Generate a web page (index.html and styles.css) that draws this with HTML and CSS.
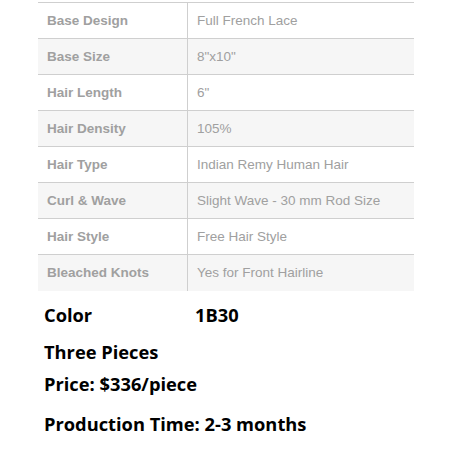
FILE: index.html
```html
<!DOCTYPE html>
<html>
<head>
<meta charset="utf-8">
<link rel="stylesheet" href="styles.css">
</head>
<body>
<div class="page">
  <table class="specs">
    <tr><th>Base Design</th><td>Full French Lace</td></tr>
    <tr class="alt"><th>Base Size</th><td>8"x10"</td></tr>
    <tr><th>Hair Length</th><td>6"</td></tr>
    <tr class="alt"><th>Hair Density</th><td>105%</td></tr>
    <tr><th>Hair Type</th><td>Indian Remy Human Hair</td></tr>
    <tr class="alt"><th>Curl &amp; Wave</th><td>Slight Wave - 30 mm Rod Size</td></tr>
    <tr><th>Hair Style</th><td>Free Hair Style</td></tr>
    <tr class="alt"><th>Bleached Knots</th><td>Yes for Front Hairline</td></tr>
  </table>
  <div class="info">
    <div class="line color-line"><span class="key">Color</span><span class="val">1B30</span></div>
    <div class="line pieces">Three Pieces</div>
    <div class="line price">Price: $336/piece</div>
    <div class="line prod">Production Time: 2-3 months</div>
  </div>
</div>
</body>
</html>
```
FILE: styles.css
```css
html, body {
  margin: 0;
  padding: 0;
  background: #fff;
}
.page {
  padding: 2px 38px 0 38px;
}
.specs {
  width: 376px;
  border-collapse: collapse;
  font-family: "Liberation Sans", Arial, sans-serif;
  font-size: 13.5px;
  color: #a0a0a0;
}
.specs tr {
  height: 36px;
  border-top: 1px solid #cfcfcf;
}
.specs tr.alt {
  background: #f6f6f6;
}
.specs th, .specs td {
  padding: 0 0 0 9px;
  text-align: left;
  vertical-align: middle;
}
.specs th {
  width: 140px;
  font-weight: bold;
  border-right: 1px solid #cfcfcf;
}
.specs td {
  font-weight: normal;
}
.info {
  font-family: "Open Sans", "Noto Sans", sans-serif;
  font-weight: bold;
  font-size: 18.3px;
  color: #000;
  padding-left: 6px;
}
.line {
  line-height: 32px;
}
.color-line {
  display: flex;
  margin-top: 8px;
  margin-bottom: 5px;
}
.color-line .key {
  width: 151px;
}
.price {
  margin-bottom: 8px;
}
```
